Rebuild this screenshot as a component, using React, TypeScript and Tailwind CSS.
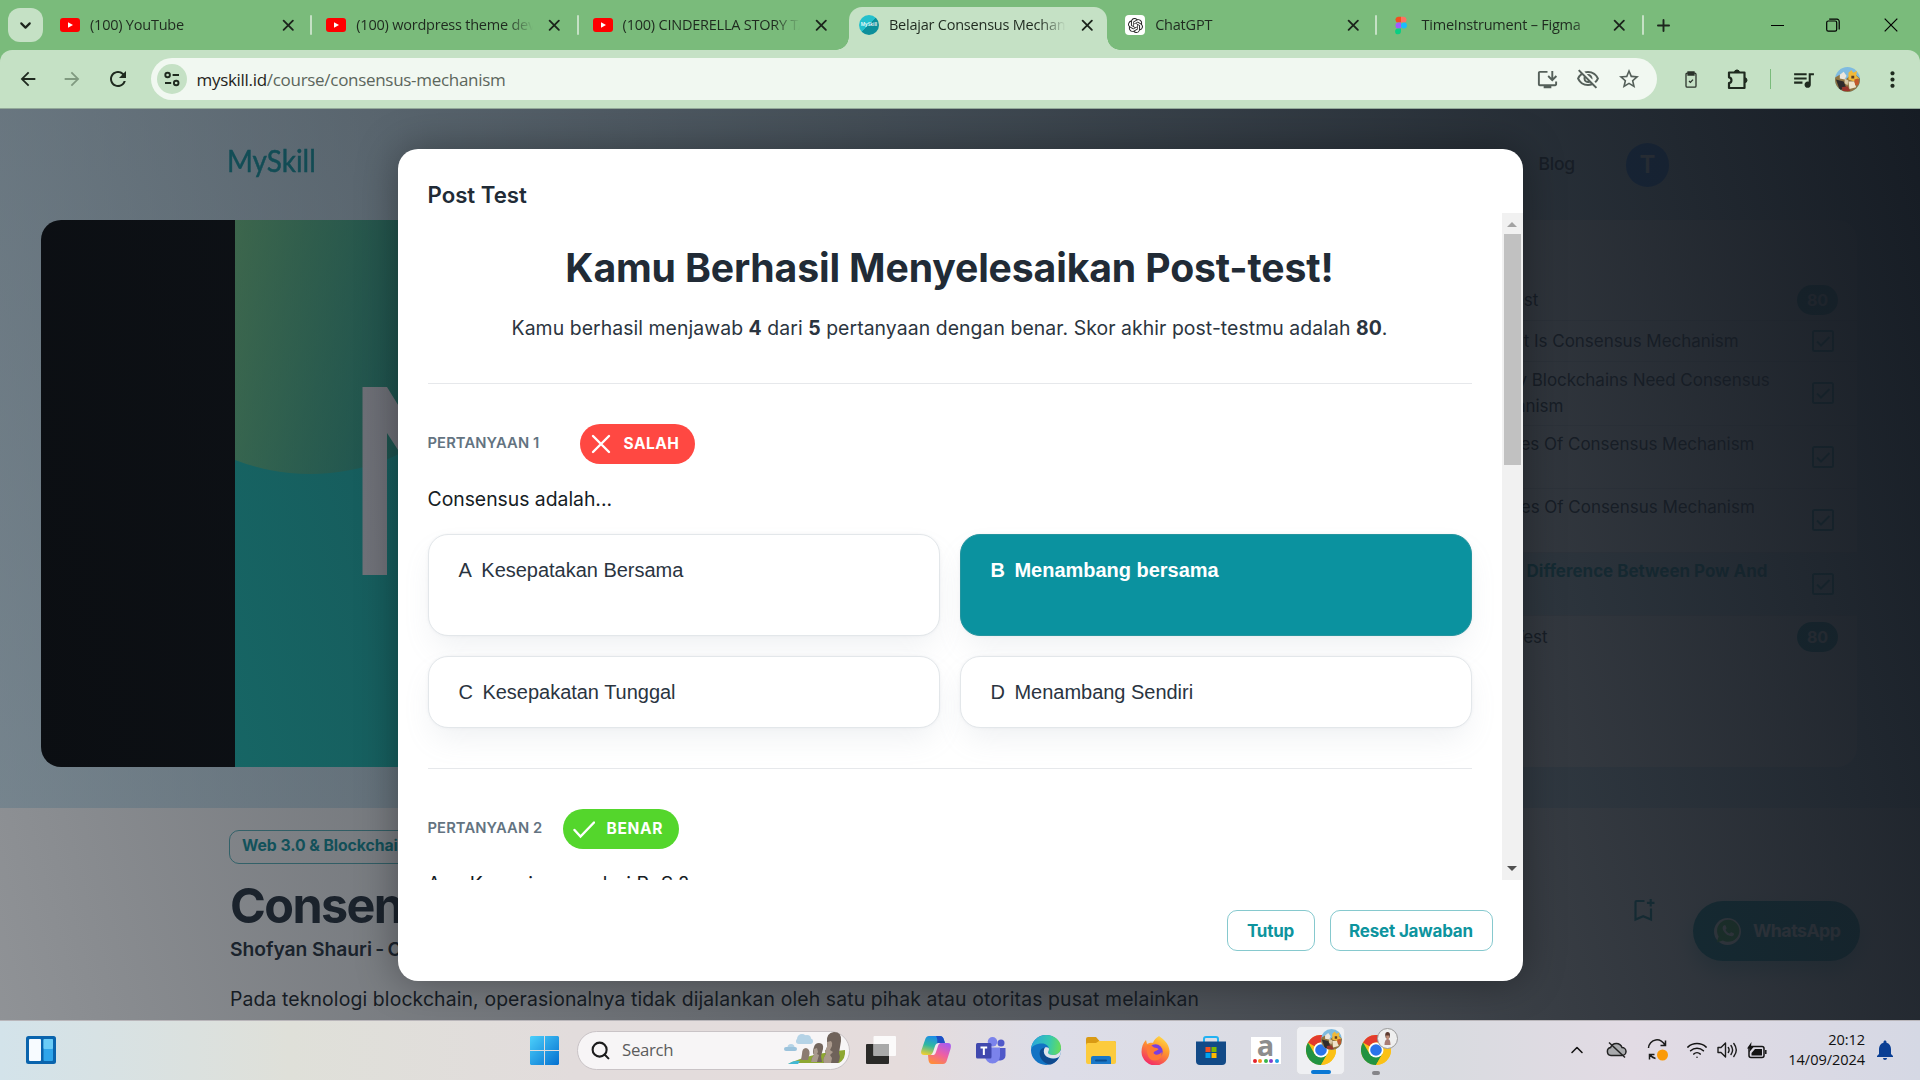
import React from "react";
import { X, ChevronDown, Plus, Search, ChevronUp, Wifi } from "lucide-react";
import {
  MdArrowBack,
  MdArrowForward,
  MdRefresh,
  MdOutlineInstallDesktop,
  MdOutlineVisibilityOff,
  MdStarOutline,
  MdQueueMusic,
  MdMoreVert,
  MdNotifications,
} from "react-icons/md";
import { IoLogoWhatsapp } from "react-icons/io";
import { SiOpenai } from "react-icons/si";

/* ---------- favicons ---------- */

function YouTubeIcon() {
  return (
    <svg width="20" height="14" viewBox="0 0 20 14">
      <rect width="20" height="14" rx="3" fill="#ff0000" />
      <path d="M8 4.2 13 7 8 9.8z" fill="#fff" />
    </svg>
  );
}

function MySkillIcon() {
  return (
    <span className="flex h-5 w-5 items-center justify-center rounded-full bg-linear-to-br from-[#23c0cc] from-50% to-[#0c8f9b] to-50%">
      <span className="text-[4.8px] font-semibold text-white">MySkill</span>
    </span>
  );
}

function ChatGptIcon() {
  return (
    <span className="flex h-5 w-5 items-center justify-center rounded-[4px] bg-white">
      <SiOpenai size={15} color="#222" />
    </span>
  );
}

function FigmaIcon() {
  return (
    <svg width="13" height="19" viewBox="0 0 26 38" className="mx-1">
      <path d="M13 0H6.5a6.4 6.4 0 0 0 0 12.7H13z" fill="#f24e1e" />
      <path d="M13 0h6.5a6.4 6.4 0 0 1 0 12.7H13z" fill="#ff7262" />
      <path d="M13 12.7H6.5a6.4 6.4 0 0 0 0 12.7H13z" fill="#a259ff" />
      <circle cx="19.5" cy="19" r="6.4" fill="#1abcfe" />
      <path d="M6.5 25.3H13v6.4a6.4 6.4 0 1 1-6.5-6.4z" fill="#0acf83" />
    </svg>
  );
}

/* ---------- browser chrome ---------- */

type TabInfo = { title: string; icon: React.ReactNode; active?: boolean; divider?: boolean };

const tabs: TabInfo[] = [
  { title: "(100) YouTube", icon: <YouTubeIcon />, divider: true },
  { title: "(100) wordpress theme development", icon: <YouTubeIcon />, divider: true },
  { title: "(100) CINDERELLA STORY TAMIL", icon: <YouTubeIcon /> },
  { title: "Belajar Consensus Mechanism", icon: <MySkillIcon />, active: true },
  { title: "ChatGPT", icon: <ChatGptIcon />, divider: true },
  { title: "TimeInstrument – Figma", icon: <FigmaIcon />, divider: true },
];

function Tab({ title, icon, active, divider }: TabInfo) {
  return (
    <div className="relative h-[50px] w-[266.3px] shrink-0">
      {active && (
        <>
          <div className="absolute top-[7px] bottom-0 left-[4.1px] w-[258px] rounded-t-[13px] bg-[#c5e1c5]" />
          <div className="absolute bottom-0 -left-[8.900px] h-[13px] w-[13px] bg-[radial-gradient(circle_at_0_0,transparent_12.5px,#c5e1c5_13px)]" />
          <div className="absolute bottom-0 left-[262.1px] h-[13px] w-[13px] bg-[radial-gradient(circle_at_100%_0,transparent_12.5px,#c5e1c5_13px)]" />
        </>
      )}
      <div className="relative flex h-full items-center pl-[14px]">
        <span className="flex w-5 justify-center">{icon}</span>
        <span className="ml-[10px] w-[177px] overflow-hidden text-[14.5px] tracking-[-0.22px] whitespace-nowrap text-[#1f2a1f] [mask-image:linear-gradient(90deg,#000_85%,transparent)]">
          {title}
        </span>
        <X size={18.5} strokeWidth={2.4} className="ml-[12px] text-[#1c241c]" />
      </div>
      {divider && <div className="absolute top-[15px] right-0 h-5 w-0.5 rounded bg-[#c5e1c5]" />}
    </div>
  );
}

function TabStrip() {
  return (
    <div className="flex h-[50px] items-start bg-[#7abb7b]">
      <div className="mt-2 ml-2 flex h-[34px] w-[35px] items-center justify-center rounded-[12px] bg-[#c5e1c5]">
        <ChevronDown size={17} strokeWidth={3} className="text-[#1c241c]" />
      </div>
      <div className="ml-[3px] flex">
        {tabs.map((t) => (
          <Tab key={t.title} {...t} />
        ))}
      </div>
      <div className="flex h-[50px] w-[40px] items-center justify-center">
        <Plus size={19} strokeWidth={2.4} className="text-[#1c241c]" />
      </div>
      <div className="ml-auto flex h-[50px] items-center text-black">
        <svg width="13" height="13" viewBox="0 0 13 13" className="mr-[42px]" fill="none" stroke="currentColor">
          <path d="M0 6.5h13" />
        </svg>
        <svg width="14" height="14" viewBox="0 0 14 14" className="mr-[44px]" fill="none" stroke="currentColor" strokeWidth="1.2">
          <rect x="0.7" y="3" width="10" height="10.2" rx="1.6" />
          <path d="M3.2 1.2H11a2.2 2.2 0 0 1 2.2 2.2v8" />
        </svg>
        <svg width="14" height="14" viewBox="0 0 14 14" className="mr-[22px]" fill="none" stroke="currentColor" strokeWidth="1.2">
          <path d="M.7.7l12.6 12.6M13.3.7.7 13.3" />
        </svg>
      </div>
    </div>
  );
}

function TuneIcon() {
  return (
    <svg width="16" height="16" viewBox="0 0 16 16" fill="none" stroke="#1f2a1f" strokeWidth="1.9">
      <circle cx="3.6" cy="4" r="2.3" />
      <path d="M8.6 4H15M1 12h6.2" />
      <circle cx="12.2" cy="12" r="2.3" />
    </svg>
  );
}

function ClipboardIcon() {
  return (
    <svg width="12" height="17" viewBox="0 0 12 17" fill="none" stroke="#2b332b" strokeWidth="1.3">
      <rect x="1" y="2.2" width="10" height="14" rx="1.2" />
      <path d="M3 1h6v3H3z" fill="#2b332b" />
      <path d="m4 10 1.4 1.4 2.6-2.800" />
    </svg>
  );
}

function ExtensionIcon() {
  return (
    <svg width="22" height="22" viewBox="0 0 22 22" fill="none" stroke="#1f2a1f" strokeWidth="2.2" strokeLinejoin="round">
      <path d="M2 4.500h15.500v15.500H2v-4.800a3 3 0 0 0 0-5.900z" />
      <path d="M8 4a2.200 2.200 0 0 1 4.400 0z" fill="#1f2a1f" stroke="none" />
      <path d="M7.400 4.500a2.500 2.500 0 0 1 5 0zM17.500 9.700a2.500 2.500 0 0 1 0 5z" fill="#1f2a1f" strokeWidth="1" />
    </svg>
  );
}

function ProfilePicture({ size }: { size: number }) {
  return (
    <svg width={size} height={size} viewBox="0 0 26 26">
      <defs>
        <clipPath id="pp">
          <circle cx="13" cy="13" r="13" />
        </clipPath>
      </defs>
      <g clipPath="url(#pp)">
        <rect width="26" height="26" fill="#7fbbe0" />
        <path d="M0 11l5-3 6 5 8-7 7 6v14H0z" fill="#8f7442" />
        <path d="M14 6l3-3 2 3 4-2-1 5 3 3-5 3-6-2z" fill="#f0b93a" />
        <path d="M5 8l4-3 3 4-2 4-5-1z" fill="#ece6dc" />
        <path d="M1 13l8 2 3 7-7 2z" fill="#2f2b2c" />
        <path d="M10 12l4 2-1 5-3-2z" fill="#d9c9a6" />
        <path d="M14 15h6l2 6-7 2z" fill="#efe4cb" />
        <path d="M20 13l4-1 1 6-4 1z" fill="#c4572a" />
        <path d="M7 21l6-1 3 5H8z" fill="#99352c" />
        <path d="M17 9h3v3h-3z" fill="#5a3c22" />
      </g>
    </svg>
  );
}

function Toolbar() {
  return (
    <div className="bg-[#7abb7b]">
      <div className="flex h-[59px] items-center rounded-t-[12px] border-b border-[#93a99a] bg-[#c5e1c5] text-[#1f2a1f]">
        <MdArrowBack size={22} className="ml-[17px]" />
        <MdArrowForward size={22} className="ml-[22px] text-[#809a80]" />
        <MdRefresh size={24} className="ml-[22.5px]" />
        <div className="ml-[21px] flex h-[42px] w-[1506px] items-center rounded-full bg-[#f1f8f1]">
          <div className="ml-[6px] flex h-[30px] w-[30px] items-center justify-center rounded-full bg-[#c5e1c5]">
            <TuneIcon />
          </div>
          <div className="mt-[1px] ml-[10px] text-[17px] tracking-[-0.3px] text-[#5c665c]">
            <span className="text-[#1f2420]">myskill.id</span>/course/consensus-mechanism
          </div>
          <div className="mr-[16px] ml-auto flex items-center gap-[17px] text-[#55605a]">
            <MdOutlineInstallDesktop size={23} />
            <MdOutlineVisibilityOff size={24} />
            <MdStarOutline size={24} />
          </div>
        </div>
        <div className="ml-[28px]">
          <ClipboardIcon />
        </div>
        <div className="ml-[30px]">
          <ExtensionIcon />
        </div>
        <div className="ml-[21px] h-5 w-[1.5px] bg-[#7abb7b]" />
        <MdQueueMusic size={25} className="ml-[20px]" />
        <div className="ml-[19px]">
          <ProfilePicture size={25} />
        </div>
        <MdMoreVert size={25} className="ml-[20px]" />
      </div>
    </div>
  );
}

/* ---------- course page ---------- */

function ScorePill() {
  return (
    <div className="mr-[19px] ml-auto flex h-[30px] w-[41px] items-center justify-center rounded-full bg-[#0d949e] text-[16px] font-bold text-white">
      80
    </div>
  );
}

function CheckBox() {
  return (
    <svg width="22" height="22" viewBox="0 0 22 22" fill="none" stroke="#0d949e" strokeWidth="2" className="mr-[23px] ml-auto self-center">
      <rect x="1" y="1" width="20" height="20" rx="1.5" />
      <path d="m5 11.5 4 4L17.5 7" />
    </svg>
  );
}

function Lesson({ lines, active }: { lines: string[]; active?: boolean }) {
  return (
    <div
      className={
        active
          ? "flex h-[63.5px] border-b border-[#dfe3e8] bg-[#d3eaf3] pt-[5px] font-bold tracking-[-0.02px] text-[#0d949e]"
          : "flex h-[63.5px] border-b border-[#dfe3e8] pt-[5px]"
      }
    >
      <div className="ml-[71px]">
        {lines.map((l) => (
          <div key={l}>{l}</div>
        ))}
      </div>
      <div className="-mt-[5px] ml-auto flex">
        <CheckBox />
      </div>
    </div>
  );
}

function Syllabus() {
  return (
    <div className="mr-[63px] ml-auto h-[547px] w-[457px] overflow-hidden rounded-[20px] bg-white pt-[60px] text-[17px] leading-[26px] tracking-[-0.03px] text-[#212b36]">
      <div className="flex h-[41px] items-center border-b border-[#dfe3e8]">
        <span className="ml-[71px]">Pre-Test</span>
        <ScorePill />
      </div>
      <div className="flex h-[41px] items-center border-b border-[#dfe3e8]">
        <span className="ml-[71px]">1. What Is Consensus Mechanism</span>
        <CheckBox />
      </div>
      <Lesson lines={["2. Why Blockchains Need Consensus", "Mechanism"]} />
      <Lesson lines={["3. Types Of Consensus Mechanism", "Pt. 1"]} />
      <Lesson lines={["4. Types Of Consensus Mechanism", "Pt. 2"]} />
      <Lesson lines={["5. The Difference Between Pow And", "Pos"]} active />
      <div className="flex h-[41px] items-center">
        <span className="ml-[72px]">Post-Test</span>
        <ScorePill />
      </div>
    </div>
  );
}

function VideoPlayer() {
  return (
    <div className="ml-[41px] flex h-[547px] w-[1100px] overflow-hidden rounded-[20px] bg-black">
      <svg width="906" height="547" viewBox="0 0 906 547" className="ml-[194px]">
        <defs>
          <linearGradient id="disc" gradientUnits="userSpaceOnUse" x1="0" y1="0" x2="200" y2="40">
            <stop offset="0" stopColor="#74cf85" />
            <stop offset="1" stopColor="#26a892" />
          </linearGradient>
        </defs>
        <rect width="906" height="547" fill="#17c0b4" />
        <circle cx="75" cy="46" r="208" fill="url(#disc)" />
        <path d="M127.500 167h24.500l90 146V167h26v188h-24L152 213v142h-24.500z" fill="#f4f0f6" />
      </svg>
    </div>
  );
}

function BookmarkAddIcon() {
  return (
    <svg width="21" height="23" viewBox="0 0 21 23" fill="none" stroke="#0d949e" strokeWidth="2.200">
      <path d="M10.500 2H2.500q-1 0-1 1v17.500l7.700-3.300 7.800 3.300V9.500" />
      <path d="M16.700 0v7.600M12.900 3.800h7.600" />
    </svg>
  );
}

function CoursePage() {
  return (
    <div className="h-full bg-white font-[Inter,sans-serif]">
      <div className="h-[699px] bg-linear-to-b from-[#c9dfea] to-[#d2e9f4]">
        <div className="flex h-[111px] items-center">
          <span className="-mt-[8px] ml-[227px] origin-left scale-x-[0.9] font-[Lato,sans-serif] text-[31px] [-webkit-text-stroke:0.5px_#0d949e] text-[#0d949e]">
            MySkill
          </span>
          <span className="ml-auto text-[17.5px] font-medium tracking-[-0.2px] text-[#212b36]">Blog</span>
          <span className="mr-[251px] ml-[51px] flex h-[44px] w-[43px] items-center justify-center rounded-full bg-[#1877f2] text-[24px] font-semibold text-white">
            T
          </span>
        </div>
        <div className="flex">
          <VideoPlayer />
          <Syllabus />
        </div>
      </div>
      <div className="flex">
        <div className="pl-[229px]">
          <div className="mt-[22px] flex h-[34px] w-[220px] items-center rounded-[10px] border border-[#0d949e]/70 pb-[2px] pl-[12px] text-[15.75px] font-bold tracking-[-0.05px] whitespace-nowrap text-[#0d949e]">
            Web 3.0 &amp; Blockchain
          </div>
          <h1 className="mt-[12px] ml-[1px] text-[48.5px] leading-[60px] font-bold tracking-[-1.600px] text-[#212b36]">Consensus Mechanism</h1>
          <div className="mt-[-2px] ml-[1px] text-[19.3px] leading-[30px] font-semibold tracking-[-0.05px] text-[#212b36]">
            Shofyan Shauri<span className="-mx-[1.5px]"> - </span>Consultant
          </div>
          <p className="mt-[20px] ml-[1px] text-[19.4px] leading-[30px] tracking-[0.120px] whitespace-nowrap text-[#161c24]">
            Pada teknologi blockchain, operasionalnya tidak dijalankan oleh satu pihak atau otoritas pusat melainkan
          </p>
        </div>
        <div className="mt-[87px] mr-[60px] ml-auto flex">
          <div className="mt-[4px] mr-[38px]">
            <BookmarkAddIcon />
          </div>
          <div className="mt-[6px] flex h-[60px] w-[167px] items-center rounded-full bg-[#0d949e] pl-[21px] shadow-[0_10px_20px_rgba(13,148,158,0.35)]">
            <span className="flex h-[27px] w-[27px] items-center justify-center rounded-full bg-white">
              <IoLogoWhatsapp size={26} color="#3fc351" />
            </span>
            <span className="ml-[12px] text-[17.7px] font-bold tracking-[-0.5px] text-white">WhatsApp</span>
          </div>
        </div>
      </div>
    </div>
  );
}

/* ---------- modal ---------- */

function Badge({ ok }: { ok?: boolean }) {
  return (
    <div
      className={
        ok
          ? "flex h-10 w-[116px] items-center rounded-full bg-[#54d62c] pl-[10px] text-[15.5px] font-bold text-white"
          : "flex h-10 w-[115px] items-center rounded-full bg-[#ff4842] pl-[10px] text-[15.5px] font-bold text-white"
      }
    >
      <svg width="22" height="22" viewBox="0 0 22 22" fill="none" stroke="#fff" strokeWidth="2.4" strokeLinecap="round">
        {ok ? <path d="m1.500 12 6 6.500L21 4.500" /> : <path d="M3 3l16 16M19 3l-16 16" />}
      </svg>
      <span className={ok ? "ml-[12px] tracking-[0.7px]" : "ml-[12px] tracking-[0.5px]"}>{ok ? "BENAR" : "SALAH"}</span>
    </div>
  );
}

function Option({ letter, text, chosen, tall }: { letter: string; text: string; chosen?: boolean; tall?: boolean }) {
  return (
    <div
      className={[
        "flex rounded-[20px] border pt-[20px] pl-[30px] font-['Liberation_Sans',Arial,sans-serif] text-[20px] leading-[30px] tracking-[-0.02px] shadow-[0_15px_30px_-5px_rgba(145,158,171,0.14),0_0_3px_rgba(145,158,171,0.12)]",
        tall ? "h-[102px]" : "h-[72px]",
        chosen ? "border-[#25959f] bg-[#0b929f] font-bold text-white" : "border-[#e3e7ea] bg-white text-[#2a343f]",
      ].join(" ")}
    >
      <span className="mr-[9.5px]">{letter}</span>
      <span>{text}</span>
    </div>
  );
}

function ScrollBar() {
  return (
    <div className="flex h-full w-[21px] shrink-0 flex-col items-center bg-[#f1f1f1]">
      <div className="flex h-[21px] items-center pt-[2px]">
        <div className="h-0 w-0 border-x-[5px] border-b-[5px] border-x-transparent border-b-[#a3a3a3]" />
      </div>
      <div className="h-[231px] w-[17px] bg-[#c1c1c1]" />
      <div className="mt-auto flex h-[23px] items-center">
        <div className="h-0 w-0 border-x-[5px] border-t-[5px] border-x-transparent border-t-[#505050]" />
      </div>
    </div>
  );
}

function ResultModal() {
  return (
    <div className="flex h-[832px] w-[1125px] flex-col overflow-hidden rounded-[20px] bg-white font-[Inter,sans-serif] shadow-[0_0_40px_rgba(0,0,0,0.35)]">
      <h2 className="mt-[31px] ml-[30px] h-[33px] text-[22.2px] leading-[30px] font-semibold text-[#212b36]">Post Test</h2>
      <div className="flex h-[667px] shrink-0">
        <div className="h-full flex-1 overflow-hidden pr-[30px] pl-[30px]">
          <h1 className="mt-[25px] text-center text-[39.2px] leading-[60px] font-bold tracking-[-0.150px] text-[#212b36]">
            Kamu Berhasil Menyelesaikan Post-test!
          </h1>
          <p className="mt-[15px] text-center text-[19.4px] leading-[30px] tracking-[0.070px] text-[#2b3540]">
            Kamu berhasil menjawab <b>4</b> dari <b>5</b> pertanyaan dengan benar. Skor akhir post-testmu adalah <b>80</b>.
          </p>
          <hr className="mt-[40px] border-[#e6e8eb]" />
          <div className="mt-[40px] flex items-center">
            <span className="w-[152px] pb-[2px] text-[14.75px] font-semibold tracking-[0.1px] text-[#637381]">PERTANYAAN 1</span>
            <Badge />
          </div>
          <p className="mt-[20px] text-[19.4px] leading-[30px] tracking-[-0.030px] text-[#161c24]">Consensus adalah...</p>
          <div className="mt-[20px] grid grid-cols-2 gap-5">
            <Option letter="A" text="Kesepatakan Bersama" tall />
            <Option letter="B" text="Menambang bersama" chosen tall />
            <Option letter="C" text="Kesepakatan Tunggal" />
            <Option letter="D" text="Menambang Sendiri" />
          </div>
          <hr className="mt-[40px] border-[#e6e8eb]" />
          <div className="mt-[40px] flex items-center">
            <span className="w-[135px] pb-[2px] text-[14.75px] font-semibold tracking-[0.1px] text-[#637381]">PERTANYAAN 2</span>
            <Badge ok />
          </div>
          <p className="mt-[20px] text-[19.4px] leading-[30px] tracking-[0.1px] text-[#161c24]">Apa Kepanjangan dari PoS ?</p>
        </div>
        <ScrollBar />
      </div>
      <div className="mt-[30px] mr-[30px] flex justify-end gap-[15px] text-[17px] font-bold tracking-[-0.2px] text-[#0d949e]">
        <div className="flex h-[41px] w-[88px] items-center justify-center rounded-[10px] border border-[#0d949e]/50 pt-[2px]">Tutup</div>
        <div className="flex h-[41px] w-[163px] items-center justify-center rounded-[10px] border border-[#0d949e]/50 pt-[2px]">Reset Jawaban</div>
      </div>
    </div>
  );
}

/* ---------- taskbar ---------- */

function WidgetsIcon() {
  return (
    <svg width="30" height="28" viewBox="0 0 30 28">
      <rect width="30" height="28" rx="2.500" fill="#0a64ad" />
      <rect x="3" y="3" width="12" height="22" rx="1" fill="#f7fbff" />
      <rect x="17.500" y="3" width="9.500" height="22" rx="1" fill="#2fa5ea" />
      <rect x="17.500" y="3" width="9.500" height="10" rx="1" fill="#6accf7" />
    </svg>
  );
}

function StartIcon() {
  return (
    <svg width="29" height="29" viewBox="0 0 29 29">
      <defs>
        <linearGradient id="win" x1="0" y1="0" x2="1" y2="1">
          <stop offset="0" stopColor="#4cd0fb" />
          <stop offset="1" stopColor="#0470d0" />
        </linearGradient>
      </defs>
      <path d="M1 0h13v14H0V1zM15 0h13l1 1v13H15zM0 15h14v14H1l-1-1zM15 15h14v13l-1 1H15z" fill="url(#win)" />
    </svg>
  );
}

function Moai() {
  return (
    <svg width="62" height="36" viewBox="0 0 62 36">
      <g fill="#b5d3e6">
        <circle cx="18" cy="7" r="5" />
        <circle cx="23" cy="7" r="4" />
        <rect x="12" y="6.500" width="17" height="5.500" rx="2.700" />
        <circle cx="7" cy="15.500" r="3.500" />
        <rect x="0" y="15" width="13" height="4" rx="2" fill="#9cc3dc" />
      </g>
      <path d="M4 32Q24 22 61 18q1 9-6 13H10z" fill="#8ea832" />
      <path d="M4 32q6-4 12-3l-2 3z" fill="#42b8d4" />
      <path d="M40 31q-2-4 2-9l-1-3q3-4 2-9-1-9 7-10 8 0 7 9l-2 12q2 5-1 10z" fill="#6f625a" />
      <path d="M40 31q-2-4 2-9l-1-3q3-4 2-9l4-1q2 2 1 5l-2 4 3 2-3 3 2 3-1 5z" fill="#ab9a8d" />
      <path d="M27 30q0-4 3-7-2-3 0-8 1-4 5-4 5 0 4 6l-2 7 1 6z" fill="#74665d" />
      <path d="M27 30q0-4 3-7-1-3 0-6l3-1 1 4-1 2 2 1-2 7z" fill="#a99a8d" />
      <path d="M17 28l1-6q0-6 4-6 4 1 3.500 6l-1.500 6z" fill="#8b7b70" />
    </svg>
  );
}

function TaskViewIcon() {
  return (
    <svg width="30" height="29" viewBox="0 0 30 29">
      <rect x="0" y="8" width="23" height="20" rx="1" fill="#2a2a28" />
      <rect x="7.500" y="0" width="22.500" height="20" rx="1" fill="#fff" opacity="0.85" />
      <path d="M7.500 8H23v12H7.500z" fill="#a9a9a9" />
    </svg>
  );
}

function CopilotIcon() {
  return (
    <svg width="30" height="28" viewBox="0 0 30 28">
      <defs>
        <linearGradient id="cpa" x1="0.500" y1="0" x2="0.200" y2="1">
          <stop offset="0" stopColor="#1c8bea" />
          <stop offset="0.500" stopColor="#2fb8a0" />
          <stop offset="1" stopColor="#f1cf32" />
        </linearGradient>
        <linearGradient id="cpb" x1="0.800" y1="0" x2="0.300" y2="1">
          <stop offset="0" stopColor="#a65cf0" />
          <stop offset="0.500" stopColor="#ee5fa5" />
          <stop offset="1" stopColor="#ff8c3c" />
        </linearGradient>
      </defs>
      <path d="M8 0h11q3 0 4 4l1 3h-5q-3 0-4 3l-2 6q-1 3-4 3H3q-4 0-2.500-5L4 4Q5 0 8 0z" fill="url(#cpa)" />
      <path d="M15 0h4q3 0 4 4l1 3h-5q-2 0-3 1 1-5-1-8z" fill="#1f4fc4" />
      <path d="M22 28H11q-3 0-3.500-4L7 19h3q3 0 4-3l2-6q1-3 4-3h7q4 0 2.500 6L26 24q-1 4-4 4z" fill="url(#cpb)" />
      <path d="M13 19q1.500-1 2-3l2-6q.5-2 2-3h-1q-3 0-4 3l-2 6q-1 2-2 3z" fill="#f3e9ee" />
    </svg>
  );
}

function TeamsIcon() {
  return (
    <svg width="30" height="27" viewBox="0 0 30 27">
      <circle cx="25" cy="6" r="3.500" fill="#5059c9" />
      <path d="M20 11h9.500v7.500a5 5 0 0 1-5 5H20z" fill="#5059c9" />
      <circle cx="16.500" cy="4.800" r="4.800" fill="#7b83eb" />
      <path d="M9 10.500h15V19a7.500 7.500 0 0 1-15 0z" fill="#7b83eb" />
      <rect y="6" width="15.500" height="15.500" rx="1.500" fill="#4048ae" />
      <path d="M4.500 10.500h6.700M7.850 10.500v7.500" stroke="#fff" strokeWidth="2" />
    </svg>
  );
}

function EdgeIcon() {
  return (
    <svg width="30" height="30" viewBox="0 0 30 30">
      <defs>
        <linearGradient id="eg" x1="0" y1="0.300" x2="1" y2="0.400">
          <stop offset="0" stopColor="#2aa4dc" />
          <stop offset="0.600" stopColor="#35c8b0" />
          <stop offset="1" stopColor="#66dc5a" />
        </linearGradient>
      </defs>
      <circle cx="15" cy="15" r="15" fill="#1273c4" />
      <path d="M0 14C1 5 8 0 15 0c9 0 15 6 15 12.500 0 5-4 7.500-8 7.500-3 0-5-1-5-2.500 0-1 1-1.500 1-3.500C18 11 15 8.500 11 8.500 5 8.500 1 11 0 14z" fill="url(#eg)" />
      <path d="M28 22c-3 1.800-7 2-10.500.6C13 21 11.500 16 14 12.500 8 13 7 20 11 25c3 3.600 7 5 9.500 4.200C24 28 27 25 28 22z" fill="#0f4a8f" />
      <path d="M18 14c0 2-1 2.500-1 3.500C17 19 19 20 22 20c3.500 0 7-2 8-5.500.2 4-1 6.500-2.500 7.800-3.500 1.700-7 1.500-10 .3C13 21 11.500 16 14 12.500c2-.8 4 0 4 1.500z" fill="#e0e2ea" />
    </svg>
  );
}

function ExplorerIcon() {
  return (
    <svg width="30" height="27" viewBox="0 0 30 27">
      <path d="M0 2q0-2 2-2h8l3.500 4H28q2 0 2 2v6H0z" fill="#d99a14" />
      <path d="M0 8q0-2 2-2h8l3-2h15q2 0 2 2v19q0 2-2 2H2q-2 0-2-2z" fill="#fccb3d" />
      <path d="M5 27v-6q0-2 2-2h16q2 0 2 2v6z" fill="#1a78c8" />
      <rect x="9" y="22.500" width="12" height="2" rx="1" fill="#0b4f91" />
    </svg>
  );
}

function FirefoxIcon() {
  return (
    <svg width="29" height="29" viewBox="0 0 29 29">
      <defs>
        <linearGradient id="ff" x1="0.800" y1="0" x2="0.300" y2="1">
          <stop offset="0" stopColor="#ffe14a" />
          <stop offset="0.400" stopColor="#ff9a2b" />
          <stop offset="1" stopColor="#f2276a" />
        </linearGradient>
      </defs>
      <path d="M18 0c4 3 10 7 10.500 15A14 14 0 0 1 .5 16C.5 11 2 7 5 4l1 4c2-1 3.500-1.500 6-1.300C13 4 15 2 18 0z" fill="url(#ff)" />
      <circle cx="14.500" cy="15.500" r="7.200" fill="#7a3ee0" />
      <path d="M6 9c3 0 5 .5 7 2.500 2 .5 3.500.5 4.500 1.500-1 2-4 1.500-5 4 2 3 6 2 8-1 1 5-2 8.500-7 8.500C8 24.500 5 19 6 9z" fill="#ff7a35" />
    </svg>
  );
}

function StoreIcon() {
  return (
    <svg width="30" height="29" viewBox="0 0 30 29">
      <path d="M8 6V3q0-2 2-2h10q2 0 2 2v3" fill="none" stroke="#22b2f2" strokeWidth="2" />
      <path d="M0 5.500h30V25q0 4-4 4H4q-4 0-4-4z" fill="#124a87" />
      <path d="M9.500 11h5v5h-5z" fill="#f25022" />
      <path d="M15.500 11h5v5h-5z" fill="#7fba00" />
      <path d="M9.500 17h5v5h-5z" fill="#00a4ef" />
      <path d="M15.500 17h5v5h-5z" fill="#ffb900" />
    </svg>
  );
}

function AIcon() {
  return (
    <div className="flex h-[27px] w-[30px] flex-col items-center bg-white">
      <span className="-mt-[4px] h-[24px] text-[29px] leading-[24px] font-bold text-[#8d8d8d]">a</span>
      <span className="mt-[2px] flex gap-[1.500px]">
        <i className="h-[4px] w-[4px] rounded-full bg-[#e5232b]" />
        <i className="h-[4px] w-[4px] rounded-full bg-[#f5941e]" />
        <i className="h-[4px] w-[4px] rounded-full bg-[#3bb54a]" />
        <i className="h-[4px] w-[4px] rounded-full bg-[#7d3fd0]" />
        <i className="h-[4px] w-[4px] rounded-full bg-[#1d9fe0]" />
      </span>
    </div>
  );
}

function ChromeIcon() {
  return (
    <svg width="30" height="30" viewBox="0 0 30 30">
      <circle cx="15" cy="15" r="15" fill="#fbc116" />
      <path d="M2 7.500A15 15 0 0 1 28 7.500H15a7.500 7.500 0 0 0-6.500 3.750z" fill="#e33b2e" />
      <path d="M2 7.500 8.500 18.750A7.500 7.500 0 0 0 15 22.500L13.500 30A15 15 0 0 1 2 7.500z" fill="#229342" />
      <path d="M21.500 18.750 15 30h-1.500L8.500 18.750z" fill="#229342" />
      <path d="M21.500 18.750 15 30a15 15 0 0 0 13-22.500H15z" fill="#fbc116" />
      <circle cx="15" cy="15" r="7.500" fill="#fff" />
      <circle cx="15" cy="15" r="5.800" fill="#2a74ea" />
    </svg>
  );
}

function PortraitPicture() {
  return (
    <svg width="21" height="21" viewBox="0 0 21 21">
      <circle cx="10.500" cy="10.500" r="10" fill="#efefef" stroke="#9a9a9a" />
      <path d="M8.200 7q0-3 2.400-3t2.400 3l-.6 3h-3.600z" fill="#5d3a2f" />
      <path d="M9 7.500h3.200l-.4 3.500h-2.400z" fill="#c08d76" />
      <path d="M7.500 17q0-5.500 3-6t3 6z" fill="#a87c74" />
    </svg>
  );
}

function VolumeIcon() {
  return (
    <svg width="21" height="18" viewBox="0 0 21 18" fill="none" stroke="#1c1c1c" strokeWidth="1.400" strokeLinejoin="round" strokeLinecap="round">
      <path d="M1 6.500v5h3L8.500 16V2L4 6.500z" />
      <path d="M11.300 6.500q1.600 2.500 0 5M14 4.500q3.200 4.500 0 9M16.800 2.500q5 6.500 0 13" />
    </svg>
  );
}

function Cell({ children }: { children: React.ReactNode }) {
  return <div className="flex h-full w-[55px] items-center justify-center">{children}</div>;
}

function Taskbar() {
  return (
    <div className="flex h-[60px] items-center border-t border-[#b9b6ba] bg-[linear-gradient(90deg,#d3e3ea_0%,#dfe0d9_15%,#e2dcdc_30%,#e5dcdc_47%,#dddde8_55%,#d9dbe0_75%,#e2dbe4_85%,#d5d8e4_100%)] pb-[1px] font-['Open_Sans',sans-serif]">
      <div className="ml-[26px]">
        <WidgetsIcon />
      </div>
      <div className="ml-[461px]">
        <Cell>
          <StartIcon />
        </Cell>
      </div>
      <div className="ml-[5px] flex h-[39px] w-[273px] items-center rounded-full border border-[#c9c3c6] bg-[#f7f5f6]">
        <Search size={21} strokeWidth={2.400} className="ml-[12px] text-[#1c1c1c]" />
        <span className="ml-[11px] text-[16.800px] tracking-[-0.300px] text-[#5c5c5c]">Search</span>
        <span className="mr-[3px] ml-auto">
          <Moai />
        </span>
      </div>
      <div className="ml-[3px] flex h-full items-center">
        <Cell><TaskViewIcon /></Cell>
        <Cell><CopilotIcon /></Cell>
        <Cell><TeamsIcon /></Cell>
        <Cell><EdgeIcon /></Cell>
        <Cell><ExplorerIcon /></Cell>
        <Cell><FirefoxIcon /></Cell>
        <Cell><StoreIcon /></Cell>
        <Cell><AIcon /></Cell>
        <Cell>
          <div className="relative flex h-[49px] w-[49px] items-center justify-center rounded-[5px] border border-[#dcdde2] bg-[#eff0f3]">
            <ChromeIcon />
            <span className="absolute top-[2px] right-[2px]"><ProfilePicture size={21} /></span>
            <i className="absolute bottom-0 h-[4px] w-[20px] rounded-full bg-[#0a78d4]" />
          </div>
        </Cell>
        <Cell>
          <div className="relative flex h-[49px] w-[49px] items-center justify-center">
            <ChromeIcon />
            <span className="absolute top-[2px] right-[2px]"><PortraitPicture /></span>
            <i className="absolute bottom-0 h-[4px] w-[8px] rounded-full bg-[#858589]" />
          </div>
        </Cell>
      </div>
      <div className="mr-[23px] ml-auto flex h-full items-center text-[#141414]">
        <div className="flex w-9 justify-center"><ChevronUp size={20} strokeWidth={1.900} /></div>
        <div className="flex w-[42px] justify-center">
          <svg width="21" height="18" viewBox="0 0 21 18" fill="none" stroke="#222" strokeWidth="1.500">
            <path d="M5 14.500a4 4 0 0 1-.4-7.900A6 6 0 0 1 16 6.500a4 4 0 0 1 0 8z" fill="#a9aaad" />
            <path d="M3 1.500l16 15" />
          </svg>
        </div>
        <div className="flex w-10 justify-center">
          <svg width="21" height="22" viewBox="0 0 21 22" fill="none" stroke="#1c1c1c" strokeWidth="1.500">
            <path d="M1.500 9A8.500 8.500 0 0 1 18 6.500M18.500 1.500v5h-5" />
            <path d="M8.500 19.500A8.500 8.500 0 0 1 3 15.500M2.500 20.500v-5h5" />
            <circle cx="15.500" cy="16" r="5.500" fill="#fb9a06" stroke="none" />
          </svg>
        </div>
        <div className="ml-[5px] flex w-[30px] justify-center"><Wifi size={22} strokeWidth={1.700} /></div>
        <div className="flex w-[30px] justify-center"><VolumeIcon /></div>
        <div className="flex w-[30px] justify-center">
          <svg width="20" height="17" viewBox="0 0 20 17" fill="none" stroke="#141414" strokeWidth="1.500">
            <rect x="2" y="4.500" width="15" height="11" rx="2" />
            <path d="M8 7h7v6.500H4.500V11z" fill="#141414" stroke="none" />
            <path d="M18.800 8v4" />
            <path d="M4.500 0 0 6.500h3L2 10.500 7 4.500H4z" fill="#141414" stroke="none" />
          </svg>
        </div>
        <div className="w-[93px] pb-[2px] text-right text-[14.600px] leading-[20px] tracking-[-0.080px] text-[#111]">
          <div>20:12</div>
          <div>14/09/2024</div>
        </div>
        <MdNotifications size={24} color="#0a3f94" className="ml-[8px]" />
      </div>
    </div>
  );
}

export default function App() {
  return (
    <div className="flex h-[1080px] w-[1920px] flex-col overflow-hidden font-['Open_Sans',sans-serif]">
      <TabStrip />
      <Toolbar />
      <div className="relative h-[911px] overflow-hidden">
        <CoursePage />
        <div className="absolute inset-0 flex justify-center bg-[linear-gradient(75deg,rgba(22,28,36,0.48)_0%,rgb(22,28,36)_100%)] pt-[40px]">
          <ResultModal />
        </div>
      </div>
      <Taskbar />
    </div>
  );
}
